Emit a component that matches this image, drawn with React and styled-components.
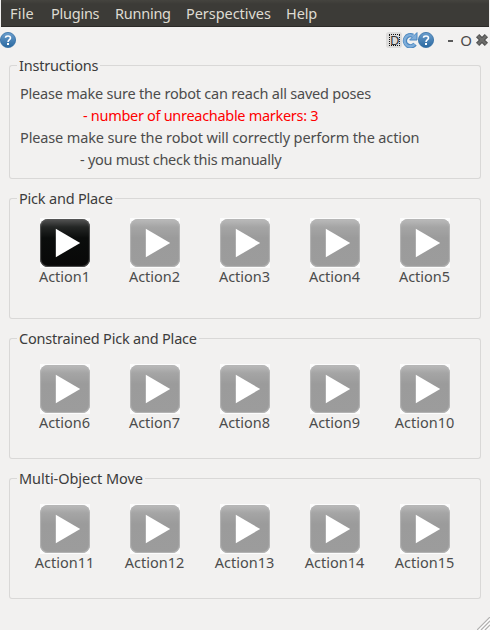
import React from "react";
import styled, { createGlobalStyle } from "styled-components";

const GlobalStyle = createGlobalStyle`
  * { box-sizing: border-box; }
  body {
    margin: 0;
    background: #f2f1f0;
    color: #4c4c4c;
    font: 14.5px/22px "Noto Sans", "Open Sans", sans-serif;
    overflow: hidden;
  }
`;

const Window = styled.div`
  width: 490px;
  height: 630px;
  display: flex;
  flex-direction: column;
  background: #f2f1f0;
`;

const MenuBar = styled.nav`
  display: flex;
  height: 27px;
  margin: 0 1px;
  padding-left: 9px;
  flex: none;
  background: linear-gradient(#45443f, #3c3b37 4px);
  border-bottom: 1px solid #2b2a27;
  color: #dfdbd2;
  line-height: 27px;
`;

const MenuItem = styled.span`
  width: ${(p) => p.$width}px;
  white-space: nowrap;
  letter-spacing: ${(p) => p.$track || 0}px;
`;

const ToolBar = styled.div`
  display: flex;
  flex: none;
  align-items: center;
  height: 25px;
  padding: 1px 1px 0 0;
`;

const Tools = styled.div`
  display: flex;
  align-items: center;
  margin-left: auto;
`;

const DockButton = styled.span`
  display: flex;
  align-items: center;
  justify-content: center;
  width: 16px;
  height: 16px;
  border-radius: 3px;
  background: #dddcdb;
`;

const DockFocus = styled.span`
  width: 11px;
  height: 12px;
  margin-left: 1px;
  border: 1px dotted #111;
  font-size: 13px;
  line-height: 10px;
  text-align: center;
  color: #333;
`;

const WindowGlyph = styled.span`
  width: 17px;
  padding-right: 1px;
  font-size: 15px;
  line-height: 16px;
  text-align: center;
`;

const Dash = styled.span`
  width: 5px;
  height: 2px;
  margin: 2px 5px 0 14px;
  background: #5a5a5a;
`;

const Groups = styled.main`
  display: flex;
  flex-direction: column;
  padding: 3px 9px 0;
`;

const Group = styled.section`
  flex: none;
  height: ${(p) => p.$height}px;
  margin-top: ${(p) => p.$top}px;
  margin-bottom: -1px;
  display: flex;
  flex-direction: column;
`;

const TitleRow = styled.header`
  display: flex;
  height: 20px;
  flex: none;
`;

const Corner = styled.span`
  width: 8px;
  height: 10px;
  margin-top: 10px;
  border: solid #d9d8d7;
  border-width: 1px 0 0 1px;
  border-top-left-radius: 3px;
`;

const TitleRule = styled.span`
  flex: 1;
  height: 10px;
  margin-top: 10px;
  border: solid #d9d8d7;
  border-width: 1px 1px 0 0;
  border-top-right-radius: 3px;
`;

const Title = styled.h2`
  margin: 0;
  padding: 0 2px;
  font-size: inherit;
  font-weight: 400;
  line-height: 21px;
  color: #3c3c3c;
  white-space: nowrap;
  letter-spacing: ${(p) => p.$track || 0}px;
`;

const GroupBody = styled.div`
  flex: 1;
  border: solid #d9d8d7;
  border-width: 0 1px 1px;
  border-radius: 0 0 3px 3px;
  padding: ${(p) => p.$pad};
`;

const Line = styled.p`
  margin: 0 0 0 ${(p) => p.$indent || 0}px;
  width: max-content;
  height: 22px;
  white-space: nowrap;
  color: ${(p) => (p.$alert ? "#ff0000" : "inherit")};
  letter-spacing: ${(p) => p.$track || 0}px;
`;

const ActionRow = styled.div`
  display: grid;
  grid-template-columns: repeat(5, 90px);
`;

const Action = styled.div`
  display: flex;
  flex-direction: column;
  align-items: center;
`;

const ActionName = styled.span`
  margin-right: 1px;
  line-height: 17px;
  white-space: nowrap;
`;

const PlayTile = styled.span`
  display: flex;
  width: 50px;
  height: 50px;
  padding: 1px 0;
  background: #fcfcfc;
`;

const PlayButton = styled.span`
  display: flex;
  align-items: center;
  width: 50px;
  height: 48px;
  padding-left: 15px;
  border-radius: 8px;
  box-shadow: inset 0 0 1px 1px ${(p) => (p.$active ? "#555" : "#b6b6b6")};
  background: ${(p) =>
    p.$active
      ? "linear-gradient(#555 0, #242625 8px, #0b0d0c 19px, #080808)"
      : "linear-gradient(#bbb 0, #a5a5a5 8px, #9b9b9b 19px, #9c9c9c)"};
`;

const Footer = styled.footer`
  display: flex;
  justify-content: flex-end;
  align-items: flex-end;
  margin-top: auto;
`;

function PlayIcon() {
  return (
    <svg width="26" height="30" viewBox="0 0 26 30">
      <path d="M.8 .8V29.2L25.2 15Z" fill="#fff" />
    </svg>
  );
}

function HelpIcon() {
  return (
    <svg width="16" height="16" viewBox="0 0 16 16">
      <defs>
        <linearGradient id="help" x1="0" y1="0" x2="0" y2="1">
          <stop offset="0" stopColor="#6c9fce" />
          <stop offset="1" stopColor="#2a689f" />
        </linearGradient>
      </defs>
      <circle cx="8" cy="8" r="7.6" fill="url(#help)" stroke="#326ea5" strokeWidth=".8" />
      <path d="M5.5 5.7C5.6 3.5 10.5 3.3 10.5 5.9C10.5 7.6 8 7.6 8 10" fill="none" stroke="#fff" strokeWidth="1.6" />
      <path d="M7 11h2v2H7z" fill="#fff" />
    </svg>
  );
}

function ReloadIcon() {
  return (
    <svg width="16" height="16" viewBox="0 0 16 16">
      <path d="M13 12.2A5.6 5.6 0 1 1 11 3.7" fill="none" stroke="#4a87bf" strokeWidth="4.4" />
      <path d="M15 .6V8H7.6Z" fill="#7fadd9" stroke="#4a87bf" strokeWidth="1" />
      <path d="M12.6 12.2A5.6 5.6 0 1 1 11.8 4.4" fill="none" stroke="#7fadd9" strokeWidth="2.4" />
    </svg>
  );
}

function CloseIcon() {
  return (
    <svg width="14" height="14" viewBox="0 0 14 14">
      <path d="M2.6 2.6L11.4 11.4M11.4 2.6L2.6 11.4" stroke="#50504f" strokeWidth="4.6" />
      <path d="M2.8 2.8L11.2 11.2M11.2 2.8L2.8 11.2" stroke="#6c6c6a" strokeWidth="2.4" />
    </svg>
  );
}

function ResizeGrip() {
  return (
    <svg width="13" height="13" viewBox="0 0 13 13">
      <path d="M1 14L14 1M5 14L14 5M9 14L14 9" stroke="#fff" strokeWidth="1.2" />
      <path d="M0 13L13 0M4 13L13 4M8 13L13 8" stroke="#b2b1b0" strokeWidth="1.2" />
    </svg>
  );
}

const menus = [
  { label: "File", width: 41, track: 0.2 },
  { label: "Plugins", width: 64, track: -0.25 },
  { label: "Running", width: 71, track: -0.25 },
  { label: "Perspectives", width: 100, track: -0.05 },
  { label: "Help", width: 40, track: -0.1 },
];

const instructions = [
  { text: "Please make sure the robot can reach all saved poses", track: -0.21 },
  { text: "- number of unreachable markers: 3", indent: 63, alert: true, track: -0.3 },
  { text: "Please make sure the robot will correctly perform the action", track: -0.13 },
  { text: "- you must check this manually", indent: 60, track: -0.28 },
];

const actionGroups = [
  { title: "Pick and Place", first: 1, pad: "10px 0 0 10px", track: -0.2 },
  { title: "Constrained Pick and Place", first: 6, pad: "16px 0 0 10px", track: -0.2 },
  { title: "Multi-Object Move", first: 11, pad: "16px 0 0 10px", track: -0.05 },
];

function GroupBox({ title, track, height, top, pad, children }) {
  return (
    <Group $height={height} $top={top}>
      <TitleRow>
        <Corner />
        <Title $track={track}>{title}</Title>
        <TitleRule />
      </TitleRow>
      <GroupBody $pad={pad}>{children}</GroupBody>
    </Group>
  );
}

export default function App() {
  return (
    <Window>
      <GlobalStyle />
      <MenuBar>
        {menus.map((m) => (
          <MenuItem key={m.label} $width={m.width} $track={m.track}>{m.label}</MenuItem>
        ))}
      </MenuBar>
      <ToolBar>
        <HelpIcon />
        <Tools>
          <DockButton><DockFocus>D</DockFocus></DockButton>
          <ReloadIcon />
          <HelpIcon />
          <Dash />
          <WindowGlyph>O</WindowGlyph>
          <CloseIcon />
        </Tools>
      </ToolBar>
      <Groups>
        <GroupBox title="Instructions" track={-0.2} height={124} top={0} pad="7px 0 0 10px">
          {instructions.map((l) => (
            <Line key={l.text} $indent={l.indent} $alert={l.alert} $track={l.track}>{l.text}</Line>
          ))}
        </GroupBox>
        {actionGroups.map((g) => (
          <GroupBox key={g.title} title={g.title} track={g.track} height={131} top={10} pad={g.pad}>
            <ActionRow>
              {[0, 1, 2, 3, 4].map((i) => (
                <Action key={i}>
                  <PlayTile>
                    <PlayButton $active={g.first + i === 1}><PlayIcon /></PlayButton>
                  </PlayTile>
                  <ActionName>{`Action${g.first + i}`}</ActionName>
                </Action>
              ))}
            </ActionRow>
          </GroupBox>
        ))}
      </Groups>
      <Footer><ResizeGrip /></Footer>
    </Window>
  );
}
